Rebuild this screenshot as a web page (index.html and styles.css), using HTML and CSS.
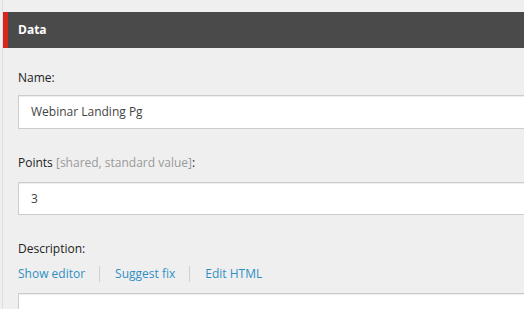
FILE: index.html
```html
<!DOCTYPE html>
<html lang="en">
<head>
    <meta charset="UTF-8">
    <meta name="viewport" content="width=device-width, initial-scale=1.0">
    <title>Data</title>
    <link rel="stylesheet" href="styles.css">
</head>
<body>
    <div class="editor">
        <div class="section-header">Data</div>

        <div class="section-body">
            <div class="field">
                <label class="field-label">Name:</label>
                <div class="field-input">Webinar Landing Pg</div>
            </div>

            <div class="field">
                <label class="field-label field-label-shared">Points <span class="field-note">[shared, standard value]</span>:</label>
                <div class="field-input">3</div>
            </div>

            <div class="field">
                <label class="field-label">Description:</label>
                <ul class="field-actions">
                    <li><a href="#">Show editor</a></li>
                    <li><a href="#">Suggest fix</a></li>
                    <li><a href="#">Edit HTML</a></li>
                </ul>
                <div class="field-input field-textarea"></div>
            </div>
        </div>
    </div>
</body>
</html>
```

FILE: styles.css
```css
/* Variables */
:root {
    --bg-color: #efefef;
    --header-color: #4a4a4a;
    --accent-color: #d9261c;
    --text-color: #222;
    --input-text: #444;
    --muted-color: #9a9a9a;
    --link-color: #2f8fc4;
    --border-color: #cccccc;
}

* {
    margin: 0;
    padding: 0;
    box-sizing: border-box;
}

html, body {
    overflow: hidden;
}

body {
    background: var(--bg-color);
    font-family: "Open Sans", Arial, sans-serif;
    font-size: 12px;
    line-height: 16px;
    color: var(--text-color);
    height: 100vh;
}

/* Editor frame */
.editor {
    margin-left: 2px;
    border-left: 1px solid #dedede;
    height: 100%;
    padding-top: 12px;
}

.section-header {
    height: 36px;
    line-height: 36px;
    background: var(--header-color);
    border-left: 5px solid var(--accent-color);
    padding-left: 10px;
    color: #fff;
    font-weight: bold;
}

.section-body {
    padding: 22px 0 0 15px;
}

/* Fields */
.field {
    margin-bottom: 26px;
}

.field-label {
    display: block;
    margin-bottom: 9px;
}

.field-label-shared {
    margin-bottom: 11px;
}

.field-note {
    color: var(--muted-color);
}

.field-input {
    width: calc(100% + 40px);
    height: 34px;
    line-height: 32px;
    padding-left: 12px;
    background: #fff;
    border: 1px solid var(--border-color);
    box-shadow: inset 0 1px 1px rgba(0, 0, 0, 0.075);
    color: var(--input-text);
}

.field-label-shared + .field-input {
    height: 33px;
    line-height: 31px;
}

.field-textarea {
    height: 80px;
}

/* Editor actions */
.field-actions {
    list-style: none;
    display: flex;
    margin: 2px 0 11px;
}

.field-actions li {
    padding: 0 14px 0 15px;
    border-left: 1px solid #d0d0d0;
}

.field-actions li:first-child {
    padding-left: 0;
    border-left: none;
}

.field-actions a {
    color: var(--link-color);
    text-decoration: none;
}
```
